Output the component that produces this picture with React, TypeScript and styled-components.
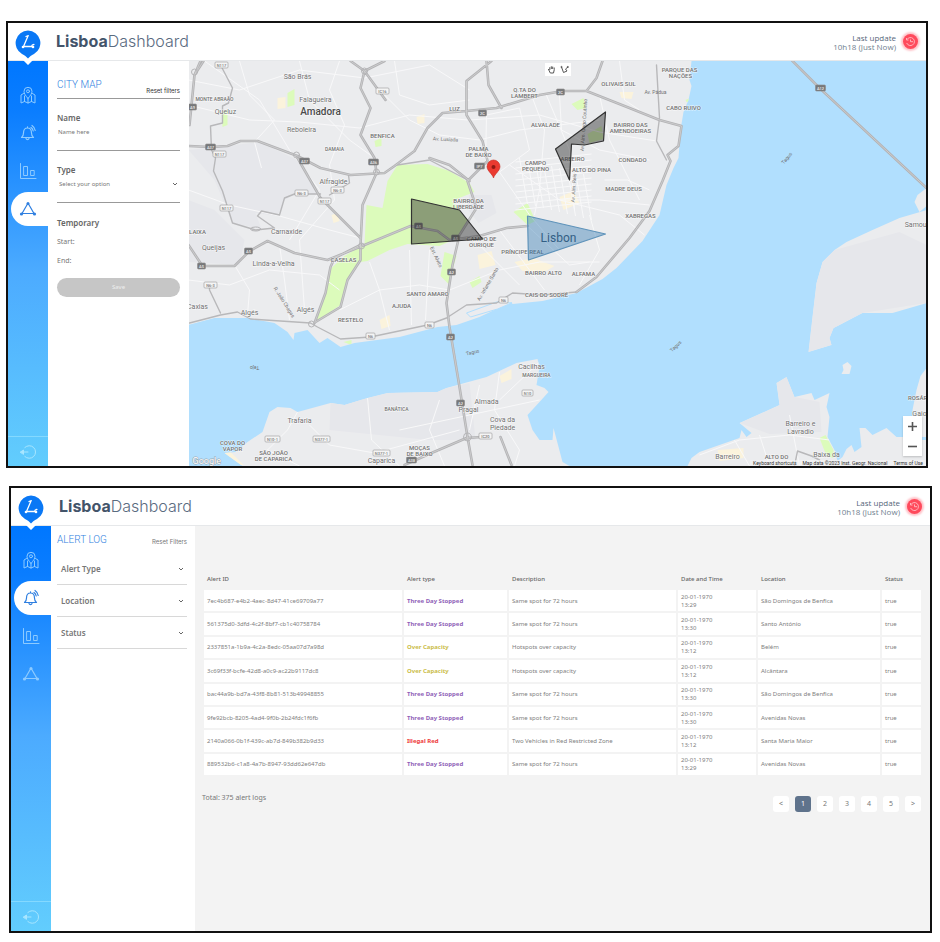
import React from "react";
import styled, { createGlobalStyle, css } from "styled-components";

const sans = `"Noto Sans", "Open Sans", sans-serif`;
const inter = `Inter, "Noto Sans", sans-serif`;

const GlobalStyle = createGlobalStyle`
  *, *::before, *::after { box-sizing: border-box; }
  body { margin: 0; background: #fff; font-family: ${sans}; color: #666; }
  button, input, select { font: inherit; color: inherit; margin: 0; padding: 0; border: 0; background: none; }
  button { cursor: pointer; }
  a { color: inherit; text-decoration: none; }
`;

/* ---------- shell ---------- */

const Page = styled.main`
  display: flex;
  flex-direction: column;
  gap: 18px;
  padding: 21px 8px 8px 6px;
`;

const Frame = styled.section<{ $shifted?: boolean }>`
  display: flex;
  flex-direction: column;
  border: 2px solid #111;
  background: #fff;
  overflow: hidden;
  ${(p) => (p.$shifted ? css`margin-left: 3px;` : css`margin-right: 4px;`)}
`;

const Header = styled.header`
  display: flex;
  align-items: center;
  height: 38px;
  padding-right: 8px;
  border-bottom: 1px solid #e6e8ea;
`;

const LogoLink = styled.a`
  position: relative;
  z-index: 2;
  width: 40px;
  height: 38px;
  flex: none;
  svg { display: block; margin: 5px auto 0; }
`;

const Title = styled.h1`
  margin: 0 0 2px 8px;
  flex: 1;
  font: 300 16px/20px ${inter};
  color: #5a6b7f;
  b { font-weight: 700; color: #43546a; }
`;

const Updated = styled.div`
  font: 400 8px/9px "Open Sans", ${sans};
  color: #707f90;
  text-align: right;
  strong { display: block; font-weight: 500; color: #55667a; }
`;

const StatusButton = styled.button`
  display: grid;
  place-items: center;
  width: 15px;
  height: 15px;
  margin-left: 7px;
  border-radius: 50%;
  background: #ff4a5c;
  box-shadow: 0 0 2px 2px #ffc2c8;
`;

const Body = styled.div`
  display: flex;
  flex: 1;
  min-height: 405px;
`;

const Sidebar = styled.nav`
  display: flex;
  flex-direction: column;
  flex: none;
  width: 40px;
  padding-top: 15px;
  background: linear-gradient(#0077ff 0%, #0a7dff 12%, #4cabff 52%, #62cdfd 100%);
`;

const NavButton = styled.button<{ $active?: boolean }>`
  display: grid;
  place-items: center;
  height: 34px;
  margin: 2px 0 2px 3px;
  padding-right: 3px;
  border-radius: 17px 0 0 17px;
  color: ${(p) => (p.$active ? "#2f7fe0" : "#8ecbff")};
  background: ${(p) => (p.$active ? "#fff" : "transparent")};
`;

const LogoutButton = styled.button`
  display: grid;
  place-items: center;
  height: 30px;
  margin-top: auto;
  border-top: 1px solid #84d9ff;
  color: #a8e6ff;
`;

/* ---------- filter panels ---------- */

const Panel = styled.aside<{ $wide?: boolean }>`
  flex: none;
  width: ${(p) => (p.$wide ? 144 : 141)}px;
  padding: ${(p) => (p.$wide ? "5px 8px 0 6px" : "15px 9px 0")};
  background: #fff;
`;

const PanelHead = styled.div<{ $ruled?: boolean }>`
  display: flex;
  justify-content: space-between;
  align-items: ${(p) => (p.$ruled ? "flex-end" : "center")};
  height: ${(p) => (p.$ruled ? 23 : 22)}px;
  border-bottom: ${(p) => (p.$ruled ? "1px solid #999" : "0")};
`;

const PanelTitle = styled.h2`
  margin: 0;
  align-self: flex-start;
  font: 300 10px/17px Roboto, ${sans};
  color: #2f7fe0;
`;

const ResetButton = styled.button<{ $muted?: boolean }>`
  font: 400 6px/14px ${inter};
  color: ${(p) => (p.$muted ? "#777" : "#333")};
`;

const Field = styled.div`
  height: 52px;
  padding-top: 13px;
  border-bottom: 1px solid #999;
`;

const FieldLabel = styled.label`
  display: block;
  font: 600 8px/12px ${sans};
  color: #666;
`;

const TextInput = styled.input`
  display: block;
  width: 100%;
  height: 16px;
  padding: 0 1px;
  font: 400 6px/16px ${sans};
  outline: 0;
  &::placeholder { color: #777; opacity: 1; }
`;

const SelectWrap = styled.div`
  display: flex;
  align-items: center;
  padding-right: 2px;
`;

const SelectInput = styled.select`
  flex: 1;
  min-width: 0;
  height: 16px;
  padding: 0 2px;
  appearance: none;
  outline: 0;
  font: 400 6px/16px ${sans};
  color: #777;
`;

const Group = styled.fieldset`
  margin: 0;
  padding: 14px 0 0;
  border: 0;
`;

const Legend = styled.legend`
  float: left;
  width: 100%;
  padding: 0 0 3px;
  font: 600 8px/12px ${sans};
  color: #666;
`;

const DateLine = styled.label`
  display: flex;
  clear: both;
  font: 400 7px/19px ${sans};
  color: #777;
  input { flex: 1; min-width: 0; height: 19px; outline: 0; }
`;

const SaveButton = styled.button`
  width: 100%;
  height: 19px;
  margin-top: 8px;
  border-radius: 10px;
  background: #c6c6c6;
  color: #eee;
  font: 400 6px/19px ${sans};
`;

const FilterToggle = styled.button`
  display: flex;
  align-items: center;
  justify-content: space-between;
  width: 100%;
  height: 32px;
  padding: 0 3px 0 4px;
  border-bottom: 1px solid #d8d8d8;
  font: 600 8px/12px ${sans};
  color: #777;
`;

/* ---------- map ---------- */

const MapArea = styled.div`
  position: relative;
  flex: 1;
  min-width: 0;
  overflow: hidden;
  background: #b1dffe;
  > svg { display: block; width: 100%; height: 100%; }
`;

const DrawTools = styled.div`
  position: absolute;
  top: 2px;
  left: 50%;
  margin-left: -13px;
  display: flex;
  button {
    display: grid;
    place-items: center;
    width: 13px;
    height: 13px;
    background: #fff;
    color: #555;
  }
`;

const ZoomTools = styled.div`
  position: absolute;
  right: 4px;
  bottom: 10px;
  display: grid;
  box-shadow: 0 1px 2px #0003;
  button {
    display: grid;
    place-items: center;
    width: 19px;
    height: 20px;
    background: #fff;
    color: #555;
  }
`;

const Credits = styled.div`
  position: absolute;
  right: 0;
  bottom: 0;
  display: flex;
  gap: 6px;
  padding: 0 3px;
  background: #f5f5f599;
  font: 400 5px/6px Roboto, sans-serif;
  color: #333;
`;

/* ---------- alert log ---------- */

const LogArea = styled.div`
  flex: 1;
  min-width: 0;
  padding: 42px 7px 0;
  background: #f3f3f3;
`;

const Table = styled.table`
  width: 100%;
  height: 209px;
  table-layout: fixed;
  border-collapse: separate;
  border-spacing: 2px;
  font: 400 6px/8px ${sans};
  color: #808080;
  text-align: left;
  th { height: 18px; padding: 0 3px; font-weight: 500; font-size: 6px; color: #666; }
  td { height: 21px; padding: 0 3px; background: #fff; }
`;

const Col = styled.col<{ $width: number }>`
  width: ${(p) => p.$width}px;
`;

const kindColor = { stopped: "#9062b8", capacity: "#cbbd4a", illegal: "#ee3a3a" };

const Kind = styled.strong<{ $kind: keyof typeof kindColor }>`
  font-weight: 700;
  color: ${(p) => kindColor[p.$kind]};
`;

const LogFooter = styled.footer`
  display: flex;
  justify-content: space-between;
  align-items: flex-start;
  padding: 13px 2px 0 0;
`;

const Total = styled.p`
  margin: 0;
  font: 400 7px/16px ${sans};
  color: #777;
`;

const Pager = styled.nav`
  display: flex;
  gap: 6px;
  padding-top: 6px;
`;

const PageButton = styled.button<{ $current?: boolean }>`
  width: 16px;
  height: 16px;
  border-radius: 3px;
  font: 400 7px/16px ${sans};
  color: ${(p) => (p.$current ? "#fff" : "#777")};
  background: ${(p) => (p.$current ? "#5f738c" : "#fff")};
`;

/* ---------- icons ---------- */

const Logo = () => (
  <svg width="28" height="38" viewBox="0 0 28 38" aria-hidden="true">
    <path d="M2 32h24l-7 0-5 5-5-5z" fill="#fff" />
    <path d="M14 2.500a12.500 12.500 0 0 1 6 23.400c-2.700 1.400-4.300 2.600-6 4.600-1.700-2-3.300-3.200-6-4.600A12.500 12.500 0 0 1 14 2.500z" fill="#0a78f5" />
    <g stroke="#fff" strokeWidth="1.300" fill="none" strokeLinecap="round" strokeLinejoin="round">
      <path d="M12 8.500l2.300-.8M14 8l-4.500 10.500h8c.3-1.500 1.200-2 2.400-2" />
    </g>
    <circle cx="9" cy="19" r="1.300" fill="#fff" />
    <circle cx="19" cy="19" r="1.300" fill="#fff" />
  </svg>
);

const iconProps = {
  width: 18,
  height: 18,
  viewBox: "0 0 18 18",
  fill: "none",
  stroke: "currentColor",
  strokeWidth: 1,
  strokeLinejoin: "round" as const,
  strokeLinecap: "round" as const,
  "aria-hidden": true,
};

const MapIcon = () => (
  <svg {...iconProps}>
    <path d="M9 12.500C6.500 9.500 5 7.500 5 5.300a4 4 0 0 1 8 0c0 2.200-1.500 4.200-4 7.200z" />
    <circle cx="9" cy="5.300" r="1.500" />
    <path d="M4.500 7.500L2 9v8l3.500-1.500L9 17l3.500-1.500L16 17V9l-2.500-1.500M5.500 10v5.500M12.500 10v5.500M9 13v4" />
  </svg>
);

const BellIcon = () => (
  <svg {...iconProps} strokeWidth={1.2}>
    <path d="M2.500 13.500c1.600-1 2-2 2-4.500 0-3 1.500-5 4-5s4 2 4 5c0 2.500.4 3.500 2 4.500zM7 14.500a1.600 1.600 0 0 0 3 0M8.500 4V2.800M12 3.500c1.200.8 1.900 2 2.200 3.500M13 1.500c1.700 1.100 2.800 2.800 3.200 5" />
  </svg>
);

const ChartIcon = () => (
  <svg {...iconProps}>
    <path d="M1.500 1.500v15H17M5 4.500h3.500v9H5zM12 8.500h3.200v5H12z" />
  </svg>
);

const ZoneIcon = () => (
  <svg {...iconProps} strokeWidth={1.2}>
    <path d="M8.500 4L3 13.500h12L9.500 4M11 6.500l2 3.500" />
    <g fill="currentColor" stroke="none">
      <circle cx="9" cy="3.500" r="1.500" />
      <circle cx="2.500" cy="14" r="1.600" />
      <circle cx="15.500" cy="14" r="1.600" />
    </g>
  </svg>
);

const LogoutIcon = () => (
  <svg {...iconProps}>
    <path d="M5.800 4.500a6.300 6.300 0 1 1 0 9M2 9h7" />
    <path d="M1.500 9l3-2v4z" fill="currentColor" />
  </svg>
);

const Chevron = () => (
  <svg width="6" height="6" viewBox="0 0 6 6" fill="none" stroke="#666" aria-hidden="true">
    <path d="M1 2l2 2 2-2" />
  </svg>
);

const ClockIcon = () => (
  <svg width="11" height="11" viewBox="0 0 11 11" fill="none" stroke="#ffb3ba" aria-hidden="true">
    <path d="M2 3.500A4 4 0 1 1 1.700 7M1.500 2v2h2M5.500 3.500v2.200H8" />
  </svg>
);

const HandIcon = () => (
  <svg width="9" height="9" viewBox="0 0 9 9" fill="none" stroke="currentColor" strokeLinejoin="round" aria-hidden="true">
    <path d="M2.800 5V2.200M4.300 4V1.300M5.700 4V1.600M7.200 4.500V2.500M1.300 4l2 4h3.200l.8-3.500" />
  </svg>
);

const PolyIcon = () => (
  <svg width="9" height="9" viewBox="0 0 9 9" fill="none" stroke="currentColor" aria-hidden="true">
    <path d="M1.500 2l2 5.500L7 6 5.500 4 8 2" />
    <circle cx="1.500" cy="2" r=".6" />
    <circle cx="7.800" cy="2" r=".6" />
  </svg>
);

const SignIcon = ({ plus }: { plus?: boolean }) => (
  <svg width="11" height="11" viewBox="0 0 11 11" stroke="currentColor" strokeWidth="1.600" aria-hidden="true">
    <path d={plus ? "M1 5.500h9M5.500 1v9" : "M1 5.500h9"} />
  </svg>
);

/* ---------- map drawing ---------- */

const land = [
  "M189 61H692L690 80 692 86 689 100 684 112 681 130 679 158 674 168 667 185 660 215 643 241 617 268 603 279 577 293 543 301 513 304 512 302 480 317 457 325 438 327 400 337 355 343 341 347 328 338 320 343 308 330 295 333 294 340 288 332 275 323 248 318 215 318 189 325z",
  "M225 453L236 452 248 442 263 432 270 412 278 407 291 408 298 412 331 403 345 405 368 398 388 393 438 392 447 388 487 377 517 363 538 359 540 367 537 385 545 388 549 392 540 402 528 415 533 430 540 440 553 440 554 428 558 443 563 462 570 466H243z",
  "M927 210L900 218 873 230 847 242 835 250 823 262 817 283 813 317 809 352 832 345 830 338 834 328 840 325 863 313 893 313 927 303z",
  "M927 188L918 195 915 202 920 212 927 206z",
  "M688 466L692 458 700 452 740 438 742 430 747 437 752 433 740 423 780 405 777 383 787 377 795 397 812 393 815 400 830 393 827 407 830 417 828 437 835 450 838 461 843 457 847 449 852 445 855 452 862 447 860 428 866 428 873 435 887 428 897 437 927 437V466z",
  "M927 368L921 376 917 390 913 410 913 440 927 440z",
  "M843 365l5-3 4 4-2 8h-8l2-4z",
];

const darkLand = [
  "M189 150L260 142 298 160 320 195 300 192 285 200 278 216 256 213 262 229 233 223 215 180z",
  "M189 200L215 210 245 240 240 265 189 262z",
  "M470 195h22l5 18-18 10-12-15z",
  "M835 250L823 262 817 283 813 317 809 352 832 345 840 325 863 313 927 303V245L900 232z",
  "M331 403L368 398 388 393 447 388 470 383 476 440 430 440 330 430z",
  "M740 423L780 405 777 383 787 377 795 397 820 402 822 432 770 434z",
];

const parks = [
  "M388 181L398 165 428 164 450 171 470 183 475 192 452 201 460 210 470 222 458 238 440 246 408 244 390 250 368 261 361 262 348 280 341 305 316 322 326 295 332 268 345 256 365 244 367 205 383 208z",
  "M588 134l14-8 2 13-14 4z",
  "M572 104l12-6 2 10-8 2z",
  "M514 212l14-9 8 18-8 4z",
  "M445 252l12 4-8 28-8-8z",
  "M470 282l10-6 2 6-9 6z",
  "M222 112l6-2v15l-5 2z",
  "M288 93l7-4v16l-7 2z",
  "M375 141l7-3v8l-6 1z",
  "M344 342l8-2v5z",
  "M686 100l7-3v5h-6z",
  "M820 438l6-3 8 15v8l-7-2z",
];

const sands = [
  "M278 98l8-1v11l-8 1z",
  "M417 117l8-3v9l-7 1z",
  "M332 215l6-2 2 8-6 2z",
  "M478 255l14-4 4 14-16 4z",
  "M560 197l14-6 6 12-16 7z",
  "M380 320l10-5 1 11-9 3z",
  "M515 262l18-4 22 8-10 6-22-1z",
  "M500 376l12-7v10l-10 4z",
  "M225 453l4-3 15 15h-8z",
  "M718 450l26-2v10l-24 3z",
  "M620 92l14 0-2 7-10-1z",
];

const streets = [
  "M189 80L240 90 300 70 365 78 430 65 470 90",
  "M205 61L260 100 290 150 320 190 290 240",
  "M240 61L250 95 275 120 255 142 262 168",
  "M300 61L310 100 350 140 375 158",
  "M189 105L250 120 300 122 360 128 410 115 468 120",
  "M340 61L330 90 345 125 330 165 335 200 300 240 305 310",
  "M395 61L400 95 430 105 470 100",
  "M380 90L410 120 440 135 480 140 520 130 600 120",
  "M189 190L230 205 280 216 330 230 361 238",
  "M189 280L230 285 270 270 320 275 340 290",
  "M235 265L250 290 248 315M280 245L285 280 290 320",
  "M340 310L380 290 420 285 450 290 500 270 540 262 600 262",
  "M370 262L380 290 390 330M410 250L412 325M430 250L426 320",
  "M487 115L520 108 530 150 500 172 486 165z",
  "M530 90L545 130 540 190 535 215M546 93L570 150 575 210",
  "M560 95L562 130 600 150 650 160M600 95L610 140 640 200",
  "M500 172L530 215 560 250M510 165L560 200 600 200 650 205",
  "M480 245L520 285M500 230L545 290M528 226L570 265 590 262",
  "M470 120L540 115 600 132 657 141M620 61L625 100 640 110",
  "M590 215L600 250 580 285M560 200L620 215 645 235M605 180L628 180 650 190",
  "M298 412L288 430 268 450 300 466M310 425L330 445 375 453 460 430",
  "M368 398L372 440 400 466M480 385L470 430M500 372L495 410 520 450 515 466M540 362L500 400",
  "M440 400L430 430 445 466M400 430L470 415 540 400",
  "M700 455L740 440 790 435 830 440M760 435L770 466M790 415L800 466M735 440L750 466",
];

const grid = Array.from({ length: 9 }, (_, i) => `M${520 + i * 8} ${158 + i * 2}l8 46M516 ${162 + i * 6}l76 -8`);

const highways = [
  "M189 146L211 147 228 146 241 141 258 141 298 156 321 168 351 175 385 173 395 166 415 151 428 128 443 113 467 111 497 108 540 95 563 91 587 91 630 108 660 120 682 126 679 146 668 155 671 161 663 181 650 211 630 238 597 277 577 292",
  "M351 61L365 71 361 88 371 108 361 135 375 158 377 173 363 205 361 245 335 258 331 267 326 293 315 323",
  "M385 61L365 71 386 100M361 245L361 260 348 280 341 307 316 322",
  "M189 245L203 266H235L250 251 268 241 295 253 328 260 365 245 411 226 438 231 450 240 480 236 507 228 528 226",
  "M298 158L321 198 361 238",
  "M190 125L195 75 201 61M204 61L195 75",
  "M492 61L467 81 467 115 483 141 488 161 468 181 477 208 460 235 453 265 447 303 450 327 460 387 468 437 473 465",
  "M430 158L450 165 470 181",
  "M487 61L489 85 502 108M603 61L597 78 587 91",
  "M792 60L820 88 927 188",
  "M405 465L432 453 467 438 482 437M501 437L512 465",
];

const roads = [
  "M577 292L543 295 513 293 497 303 467 305 447 318 428 325 371 337 341 339 318 327 311 323 281 321 251 319 238 312 221 315 190 323",
  "M220 63L233 88 229 103 223 106 223 123 211 126 212 150 216 158 214 171 223 191 233 223 256 230 275 228 258 216 262 211 280 215 285 198 295 194 321 194M349 175L350 183 330 195",
  "M210 285L210 290 221 313",
  "M657 65L660 118 657 141 667 160",
  "M398 165L430 160 470 181M795 466L798 451 812 456 820 460",
];

type LabelKind = "town" | "city" | "area" | "small" | "street" | "big";
const labels: [string, number, number, LabelKind, number?][] = [
  ["São Brás", 298, 77, "town"], ["Falagueira", 316, 100, "town"], ["Amadora", 321, 111, "city"],
  ["MONTE ABRAÃO", 215, 99, "small"], ["Queluz", 226, 112, "town"], ["Reboleira", 302, 130, "town"],
  ["BENFICA", 383, 135, "area"], ["DAMAIA", 335, 149, "small"], ["Alfragide", 334, 182, "town"],
  ["Carnaxide", 287, 232, "town"], ["Queijas", 214, 248, "town"], ["Linda-a-Velha", 274, 264, "town"],
  ["CASELAS", 344, 259, "area"], ["LAIXA", 198, 231, "area"], ["Q.TA DO", 525, 89, "area"],
  ["LAMBERT", 525, 95, "area"], ["OLIVAIS SUL", 619, 83, "area"], ["Av. Pádua", 656, 92, "street"],
  ["PARQUE DAS", 680, 69, "area"], ["NAÇÕES", 681, 75, "area"], ["CABO RUIVO", 684, 107, "area"],
  ["LUZ", 455, 108, "area"], ["ALVALADE", 546, 124, "area"], ["BAIRRO DAS", 631, 124, "area"],
  ["AMENDOEIRAS", 631, 130, "area"], ["PALMA", 479, 148, "area"], ["DE BAIXO", 479, 154, "area"],
  ["CAMPO", 536, 162, "area"], ["PEQUENO", 536, 168, "area"], ["AREEIRO", 573, 158, "area"],
  ["ALTO DO PINA", 592, 169, "area"], ["CONDADO", 633, 159, "area"], ["MADRE DEUS", 624, 188, "area"],
  ["XABREGAS", 641, 215, "area"], ["BAIRRO DA", 469, 200, "area"], ["LIBERDADE", 469, 206, "area"],
  ["CAMPO DE", 482, 238, "area"], ["OURIQUE", 482, 244, "area"], ["PRÍNCIPE REAL", 523, 251, "area"],
  ["Lisbon", 559, 238, "big"], ["Av. Lusíada", 446, 139, "street", 3], ["Caxias", 198, 307, "town"],
  ["Algés", 250, 313, "town"], ["Algés", 306, 310, "town"], ["RESTELO", 351, 319, "area"],
  ["AJUDA", 402, 305, "area"], ["SANTO AMARO", 428, 293, "area"], ["Tejo", 255, 368, "street", 180],
  ["Trafaria", 300, 421, "town"], ["BANÁTICA", 397, 409, "small"], ["COVA DO", 233, 442, "area"],
  ["VAPOR", 233, 448, "area"], ["SÃO JOÃO", 274, 452, "area"], ["DE CAPARICA", 274, 458, "area"],
  ["MOÇAS", 420, 447, "area"], ["DE BAIXO", 420, 453, "area"], ["Caparica", 382, 461, "town"],
  ["BAIRRO ALTO", 544, 272, "area"], ["ALFAMA", 584, 273, "area"], ["CAIS DO SODRÉ", 547, 294, "area"],
  ["Tagus", 473, 352, "street", -14], ["Cacilhas", 532, 367, "town"], ["MARGUEIRA", 537, 375, "small"],
  ["Almada", 487, 402, "town"], ["Pragal", 469, 410, "town"], ["Cova da", 503, 420, "town"],
  ["Piedade", 503, 428, "town"], ["Tagus", 676, 346, "street", -45], ["Av. Infante Santo", 488, 284, "street", -60],
  ["R. João Chagas", 285, 302, "street", 58], ["Av. Alm. Gago Coutinho", 584, 125, "street", -86],
  ["Av. Alm. Reis", 574, 188, "street", -86], ["Est. Alvito", 437, 257, "street", 65],
  ["Tagus", 787, 158, "street", -50], ["Samouco", 920, 225, "town"], ["ROSÁRIO", 921, 397, "area"],
  ["Gaio", 920, 414, "town"], ["Barreiro e", 801, 424, "town"], ["Lavradio", 801, 432, "town"],
  ["Barreiro", 728, 457, "town"], ["ALTO DO", 777, 456, "area"], ["Baixa da", 827, 455, "town"],
];

const shields: [string, number, number, boolean?][] = [
  ["A37", 211, 147, true], ["A37", 305, 161, true], ["A36", 374, 162, true], ["A9", 193, 107, true],
  ["A5", 249, 251, true], ["A5", 419, 226, true], ["2C", 561, 92, true], ["2C", 483, 113, true],
  ["IP7", 480, 166, true], ["A5", 456, 238, true], ["A2", 452, 272, true], ["A2", 451, 337, true],
  ["A2", 461, 403, true], ["A12", 821, 88, true], ["A38", 412, 460, true], ["A5", 202, 266, true],
  ["N117", 222, 65], ["N117", 220, 154], ["IC16", 383, 91], ["N6-3", 302, 193], ["N6-3", 338, 190],
  ["N117", 325, 201], ["N117", 227, 208], ["N6-3", 211, 285], ["N6", 371, 336], ["N6", 430, 325],
  ["N6", 504, 300], ["N10", 528, 393], ["IC20", 486, 436], ["N10-1", 273, 439], ["N377-1", 322, 439],
  ["N377-1", 382, 453],
];

const labelSize: Record<LabelKind, number> = { town: 7, city: 10, area: 6, small: 5, street: 5, big: 12 };

const MapLabel = styled.text<{ $kind: LabelKind }>`
  font-family: Roboto, sans-serif;
  font-size: ${(p) => labelSize[p.$kind]}px;
  font-weight: ${(p) => (p.$kind === "city" || p.$kind === "area" || p.$kind === "small" ? 500 : 400)};
  fill: ${(p) => (p.$kind === "big" ? "#40566b" : p.$kind === "city" ? "#4a4a4a" : "#707070")};
  stroke: ${(p) => (p.$kind === "big" || p.$kind === "street" ? "none" : "#ffffffb0")};
  stroke-width: 1px;
  paint-order: stroke;
  text-anchor: middle;
  dominant-baseline: central;
`;

const ShieldText = styled.text<{ $solid?: boolean }>`
  font: 500 4px Roboto, sans-serif;
  fill: ${(p) => (p.$solid ? "#eee" : "#777")};
  text-anchor: middle;
  dominant-baseline: central;
`;

const LisbonMap = () => (
  <svg viewBox="189 61 738 405" preserveAspectRatio="xMidYMid slice" role="img" aria-label="Map of Lisbon">
    <defs>
      <clipPath id="land"><path d={land.join("")} /></clipPath>
    </defs>
    <path d={land.join("")} fill="#ebecee" />
    <g clipPath="url(#land)">
      <path d={darkLand.join("")} fill="#e6e7eb" />
      <path d={sands.join("")} fill="#fbf3dc" />
      <path d={parks.join("")} fill="#dcfbbb" />
      <path d={streets.join("") + grid.join("")} fill="none" stroke="#f8f8f9" strokeLinejoin="round" />
    </g>
    <path d="M467 313l30-11 15 1-14 6-27 8z" fill="#ececef" stroke="#b1dffe" />
    <g fill="none" strokeLinejoin="round" strokeLinecap="round">
      <path d={roads.join("")} stroke="#b8b8ba" strokeWidth="1.400" />
      <path d={highways.join("")} stroke="#b3b3b5" strokeWidth="2.600" />
      <path d={highways.join("")} stroke="#d0d0d2" strokeWidth=".8" />
      <g stroke="#b5b5b7">
        <circle cx="195" cy="72" r="3" /><circle cx="365" cy="71" r="3" />
        <circle cx="297" cy="155" r="3" /><circle cx="377" cy="172" r="3" />
        <circle cx="362" cy="246" r="3" /><circle cx="468" cy="437" r="4" />
        <circle cx="312" cy="324" r="3" /><ellipse cx="256" cy="229" rx="5" ry="2" />
      </g>
    </g>
    {shields.map(([name, x, y, solid], i) => {
      const w = name.length * 2 + (solid ? 4 : 5);
      return (
        <g key={i}>
          <rect x={x - w / 2} y={y - 3} width={w} height="6" rx="1" fill={solid ? "#77787a" : "#f4f4f4"} stroke={solid ? "#8c8c8c" : "#999"} strokeWidth=".6" />
          <ShieldText $solid={solid} x={x} y={y}>{name}</ShieldText>
        </g>
      );
    })}
    {labels.map(([text, x, y, kind, turn], i) => (
      <MapLabel key={i} $kind={kind} x={x} y={y} transform={turn ? `rotate(${turn} ${x} ${y})` : undefined}>{text}</MapLabel>
    ))}
    <g fillOpacity=".42" stroke="#333" strokeWidth="1.200" strokeLinejoin="round">
      <path d="M412 199L460 210 483 239 412 244z" fill="#1c1c1c" />
      <path d="M606 112L604 141 585 145 572 144 570 180 556 149z" fill="#1c1c1c" />
      <path d="M528 216L606 234 529 260z" fill="#1f6fae" stroke="#5f93ba" fillOpacity=".38" />
    </g>
    <path d="M494 178c-1-4-6.500-7-6.500-11.500a6.500 6.500 0 0 1 13 0C500.500 171 495 174 494 178z" fill="#ea3a30" stroke="#c5281f" strokeWidth=".6" />
    <circle cx="494" cy="167" r="2" fill="#8f1a14" />
    <text x="193" y="464" fill="#fff" stroke="#9aa5ad" strokeWidth="1" paintOrder="stroke" fontFamily="Roboto, sans-serif" fontSize="9">Google</text>
  </svg>
);

/* ---------- shared pieces ---------- */

const navItems = [
  { id: "map", label: "City map", Icon: MapIcon },
  { id: "alerts", label: "Alert log", Icon: BellIcon },
  { id: "stats", label: "Statistics", Icon: ChartIcon },
  { id: "zones", label: "Zones", Icon: ZoneIcon },
];

const Dashboard = ({ active, shifted, children }: { active: string; shifted?: boolean; children: React.ReactNode }) => (
  <Frame $shifted={shifted}>
    <Header>
      <LogoLink href="#" aria-label="Home"><Logo /></LogoLink>
      <Title><b>Lisboa</b>Dashboard</Title>
      <Updated><strong>Last update</strong>10h18 (Just Now)</Updated>
      <StatusButton aria-label="Refresh"><ClockIcon /></StatusButton>
    </Header>
    <Body>
      <Sidebar>
        {navItems.map(({ id, label, Icon }) => (
          <NavButton key={id} $active={id === active} aria-label={label}><Icon /></NavButton>
        ))}
        <LogoutButton aria-label="Log out"><LogoutIcon /></LogoutButton>
      </Sidebar>
      {children}
    </Body>
  </Frame>
);

const columns = [
  { name: "Alert ID", width: 198 },
  { name: "Alert type", width: 103 },
  { name: "Description", width: 167 },
  { name: "Date and Time", width: 78 },
  { name: "Location", width: 122 },
  { name: "Status", width: 39 },
];

const rows: [string, string, keyof typeof kindColor, string, string, string][] = [
  ["7ec4b687-e4b2-4aec-8d47-41ce69709a77", "Three Day Stopped", "stopped", "Same spot for 72 hours", "13:29", "São Domingos de Benfica"],
  ["561375d0-3dfd-4c2f-8bf7-cb1c40758784", "Three Day Stopped", "stopped", "Same spot for 72 hours", "13:30", "Santo António"],
  ["2337851a-1b9a-4c2a-8edc-05aa07d7a98d", "Over Capacity", "capacity", "Hotspots over capacity", "13:12", "Belém"],
  ["3c69f33f-bcfe-42d8-a0c9-ac22b9117dc8", "Over Capacity", "capacity", "Hotspots over capacity", "13:12", "Alcântara"],
  ["bac44a9b-bd7a-43f8-8b81-513b49948855", "Three Day Stopped", "stopped", "Same spot for 72 hours", "13:30", "São Domingos de Benfica"],
  ["9fe92bcb-8205-4ad4-9f0b-2b24fdc1f6fb", "Three Day Stopped", "stopped", "Same spot for 72 hours", "13:30", "Avenidas Novas"],
  ["2140a066-0b1f-439c-ab7d-849b382b9d33", "Illegal Red", "illegal", "Two Vehicles in Red Restricted Zone", "13:12", "Santa Maria Maior"],
  ["889532b6-c1a8-4a7b-8947-93dd62e647db", "Three Day Stopped", "stopped", "Same spot for 72 hours", "13:29", "Avenidas Novas"],
];

export default function App() {
  return (
    <>
      <GlobalStyle />
      <Page>
        <Dashboard active="zones">
          <Panel>
            <PanelHead $ruled>
              <PanelTitle>CITY MAP</PanelTitle>
              <ResetButton>Reset filters</ResetButton>
            </PanelHead>
            <Field>
              <FieldLabel htmlFor="zone-name">Name</FieldLabel>
              <TextInput id="zone-name" placeholder="Name here" />
            </Field>
            <Field>
              <FieldLabel htmlFor="zone-type">Type</FieldLabel>
              <SelectWrap>
                <SelectInput id="zone-type"><option>Select your option</option></SelectInput>
                <Chevron />
              </SelectWrap>
            </Field>
            <Group>
              <Legend>Temporary</Legend>
              <DateLine>Start:<input /></DateLine>
              <DateLine>End:<input /></DateLine>
            </Group>
            <SaveButton>Save</SaveButton>
          </Panel>
          <MapArea>
            <LisbonMap />
            <DrawTools>
              <button aria-label="Pan"><HandIcon /></button>
              <button aria-label="Draw a zone"><PolyIcon /></button>
            </DrawTools>
            <Credits>
              <span>Keyboard shortcuts</span>
              <span>Map data ©2023 Inst. Geogr. Nacional</span>
              <a href="#">Terms of Use</a>
            </Credits>
            <ZoomTools>
              <button aria-label="Zoom in"><SignIcon plus /></button>
              <button aria-label="Zoom out"><SignIcon /></button>
            </ZoomTools>
          </MapArea>
        </Dashboard>

        <Dashboard active="alerts" shifted>
          <Panel $wide>
            <PanelHead>
              <PanelTitle>ALERT LOG</PanelTitle>
              <ResetButton $muted>Reset Filters</ResetButton>
            </PanelHead>
            {["Alert Type", "Location", "Status"].map((name) => (
              <FilterToggle key={name}>{name}<Chevron /></FilterToggle>
            ))}
          </Panel>
          <LogArea>
            <Table>
              <colgroup>
                {columns.map((c) => <Col key={c.name} $width={c.width} />)}
              </colgroup>
              <thead>
                <tr>
                  {columns.map((c) => <th key={c.name} scope="col">{c.name}</th>)}
                </tr>
              </thead>
              <tbody>
                {rows.map(([id, type, kind, text, time, place]) => (
                  <tr key={id}>
                    <td>{id}</td>
                    <td><Kind $kind={kind}>{type}</Kind></td>
                    <td>{text}</td>
                    <td>20-01-1970<br />{time}</td>
                    <td>{place}</td>
                    <td>true</td>
                  </tr>
                ))}
              </tbody>
            </Table>
            <LogFooter>
              <Total>Total: 375 alert logs</Total>
              <Pager aria-label="Pages">
                {["<", "1", "2", "3", "4", "5", ">"].map((p) => (
                  <PageButton key={p} $current={p === "1"}>{p}</PageButton>
                ))}
              </Pager>
            </LogFooter>
          </LogArea>
        </Dashboard>
      </Page>
    </>
  );
}
